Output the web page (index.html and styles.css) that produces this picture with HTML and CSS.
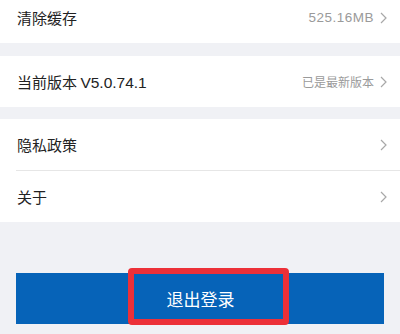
FILE: index.html
```html
<!DOCTYPE html>
<html lang="zh-CN">
<head>
<meta charset="utf-8">
<link rel="stylesheet" href="styles.css">
</head>
<body>
<div class="page">
  <div class="group first">
    <div class="row">
      <span class="label">清除缓存</span>
      <span class="right"><span class="value num">525.16MB</span><svg class="chev" width="7" height="12" viewBox="0 0 7 12"><polyline points="1,1 6,6 1,11" fill="none" stroke="#a8a8a8" stroke-width="1.2"/></svg></span>
    </div>
  </div>
  <div class="group">
    <div class="row">
      <span class="label">当前版本 <span class="num">V5.0.74.1</span></span>
      <span class="right"><span class="value">已是最新版本</span><svg class="chev" width="7" height="12" viewBox="0 0 7 12"><polyline points="1,1 6,6 1,11" fill="none" stroke="#a8a8a8" stroke-width="1.2"/></svg></span>
    </div>
  </div>
  <div class="group">
    <div class="row divided">
      <span class="label">隐私政策</span>
      <span class="right"><svg class="chev" width="7" height="12" viewBox="0 0 7 12"><polyline points="1,1 6,6 1,11" fill="none" stroke="#a8a8a8" stroke-width="1.2"/></svg></span>
    </div>
    <div class="row">
      <span class="label">关于</span>
      <span class="right"><svg class="chev" width="7" height="12" viewBox="0 0 7 12"><polyline points="1,1 6,6 1,11" fill="none" stroke="#a8a8a8" stroke-width="1.2"/></svg></span>
    </div>
  </div>
  <div class="btn-wrap">
    <div class="logout">退出登录</div>
    <div class="highlight"></div>
  </div>
</div>
</body>
</html>
```
FILE: styles.css
```css
html, body {
  margin: 0;
  padding: 0;
  background: #f0f1f5;
  font-family: "Noto Sans CJK SC", "Noto Sans", sans-serif;
  overflow: hidden;
}
.page {
  width: 400px;
  height: 334px;
  overflow: hidden;
}
.group {
  background: #fff;
  margin-top: 12px;
}
.group.first {
  margin-top: -8px;
  margin-bottom: 13px;
}
.row {
  height: 51px;
  display: flex;
  align-items: center;
  justify-content: space-between;
  margin-left: 16px;
  padding-right: 13px;
  box-sizing: border-box;
}
.row.divided {
  border-bottom: 1px solid #e6e6e6;
  height: 52px;
}
.label {
  font-size: 15px;
  color: #222;
  padding-left: 1px;
}
.label .num {
  font-family: "Liberation Sans", "Noto Sans CJK SC", sans-serif;
  font-size: 15.5px;
}
.right {
  display: flex;
  align-items: center;
}
.value {
  font-size: 12px;
  color: #9a9a9a;
  margin-right: 6px;
}
.value.num {
  font-family: "Liberation Sans", "Noto Sans CJK SC", sans-serif;
  font-size: 13.5px;
  letter-spacing: 0.5px;
}
.chev {
  display: block;
}
.btn-wrap {
  position: relative;
  margin: 51px 16px 0 16px;
}
.logout {
  height: 51px;
  background: #0663b8;
  color: #fff;
  font-size: 17px;
  display: flex;
  align-items: center;
  justify-content: center;
  padding-left: 1px;
}
.highlight {
  position: absolute;
  left: 112px;
  top: -5px;
  width: 161px;
  height: 57px;
  box-sizing: border-box;
  border: 6.5px solid #ec3038;
  border-radius: 4px;
}
```
